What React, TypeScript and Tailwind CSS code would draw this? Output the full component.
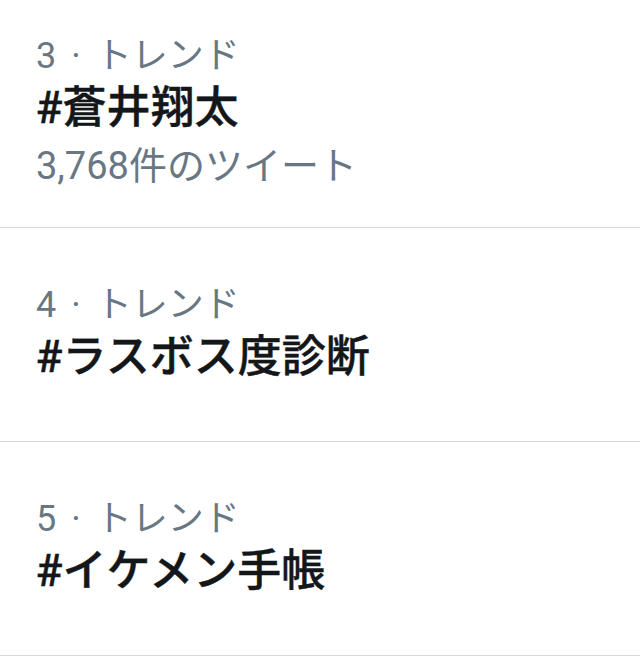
const trends = [
  { rank: 3, tag: "#蒼井翔太", count: "3,768件のツイート" },
  { rank: 4, tag: "#ラスボス度診断" },
  { rank: 5, tag: "#イケメン手帳" },
];

export default function App() {
  return (
    <div
      className="w-[640px] bg-white"
      style={{ fontFamily: 'Roboto, "Noto Sans CJK JP", sans-serif' }}
    >
      {trends.map((t, i) => (
        <div
          key={t.rank}
          className={`flex flex-col justify-center border-b border-[#d3d8dc] px-[36px] ${
            i === 0 ? "h-[228px]" : "h-[214px]"
          }`}
        >
          <div className="text-[36px] leading-[44px] text-[#687783]">
            {t.rank}
            <span className="px-[15px]">·</span>
            トレンド
          </div>
          <div className="text-[44px] leading-[60px] font-medium text-[#14171a] [-webkit-text-stroke:0.4px_#14171a]">
            {t.tag}
          </div>
          {t.count && (
            <div className="text-[38px] leading-[56px] text-[#687783]">{t.count}</div>
          )}
        </div>
      ))}
    </div>
  );
}
